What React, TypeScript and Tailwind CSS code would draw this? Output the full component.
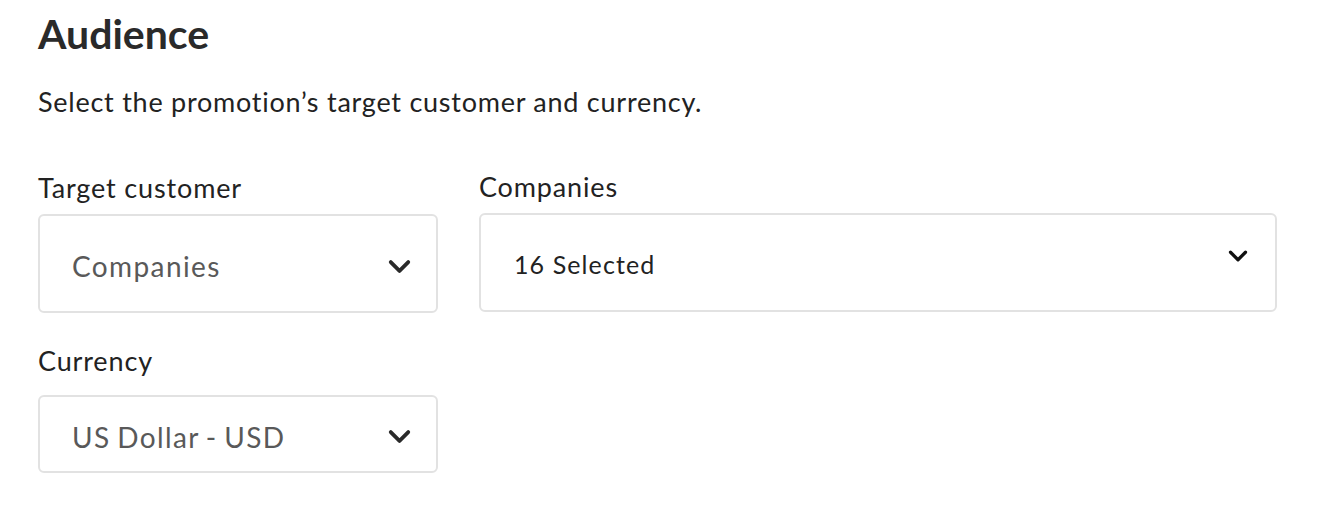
import { ChevronDown } from "lucide-react";

function Select({
  value,
  className,
  valueClass,
  iconClass,
  iconStroke,
}: {
  value: string;
  className: string;
  valueClass: string;
  iconClass: string;
  iconStroke: number;
}) {
  return (
    <div
      className={`flex items-center justify-between rounded-md border-2 border-[#e2e2e2] bg-white ${className}`}
    >
      <span className={valueClass}>{value}</span>
      <ChevronDown className={iconClass} strokeWidth={iconStroke} />
    </div>
  );
}

export default function App() {
  return (
    <div
      className="min-h-[516px] w-[1330px] bg-white pl-[38px] pt-[10px] text-[#222]"
      style={{ fontFamily: "Lato, 'Open Sans', sans-serif" }}
    >
      <h2 className="text-[41px] font-bold leading-[48px] text-[#2a2a2a]">Audience</h2>
      <p className="mt-[28px] text-[27px] leading-[32px] tracking-[0.75px] text-[#222]">
        Select the promotion’s target customer and currency.
      </p>

      <div className="mt-[54px] flex items-start gap-[41px]">
        <div className="w-[400px]">
          <label className="block text-[27px] leading-[32px] tracking-[0.85px]">
            Target customer
          </label>
          <Select
            value="Companies"
            className="mt-[10px] h-[99px] pl-[32px] pr-[19px] pt-[5px]"
            valueClass="text-[28px] leading-[34px] tracking-[1.4px] text-[#595959]"
            iconClass="h-[35px] w-[35px] text-[#2a2a2a]"
            iconStroke={2.6}
          />
        </div>
        <div className="-mt-px w-[798px]">
          <label className="block text-[27px] leading-[32px] tracking-[0.85px]">Companies</label>
          <Select
            value="16 Selected"
            className="mt-[10px] h-[99px] pl-[33px] pr-[22px] pt-[2px]"
            valueClass="text-[25px] leading-[30px] tracking-[1.1px] text-[#222]"
            iconClass="-mt-[15px] h-[30px] w-[30px] text-[#111]"
            iconStroke={2.6}
          />
        </div>
      </div>

      <div className="mt-[32px] w-[400px]">
        <label className="block text-[27px] leading-[32px] tracking-[0.85px]">Currency</label>
        <Select
          value="US Dollar - USD"
          className="mt-[18px] h-[78px] pl-[32px] pr-[19px] pt-[5px]"
          valueClass="text-[28px] leading-[34px] tracking-[1.4px] [word-spacing:-2px] text-[#595959]"
          iconClass="h-[35px] w-[35px] text-[#2a2a2a]"
          iconStroke={2.6}
        />
      </div>
    </div>
  );
}
